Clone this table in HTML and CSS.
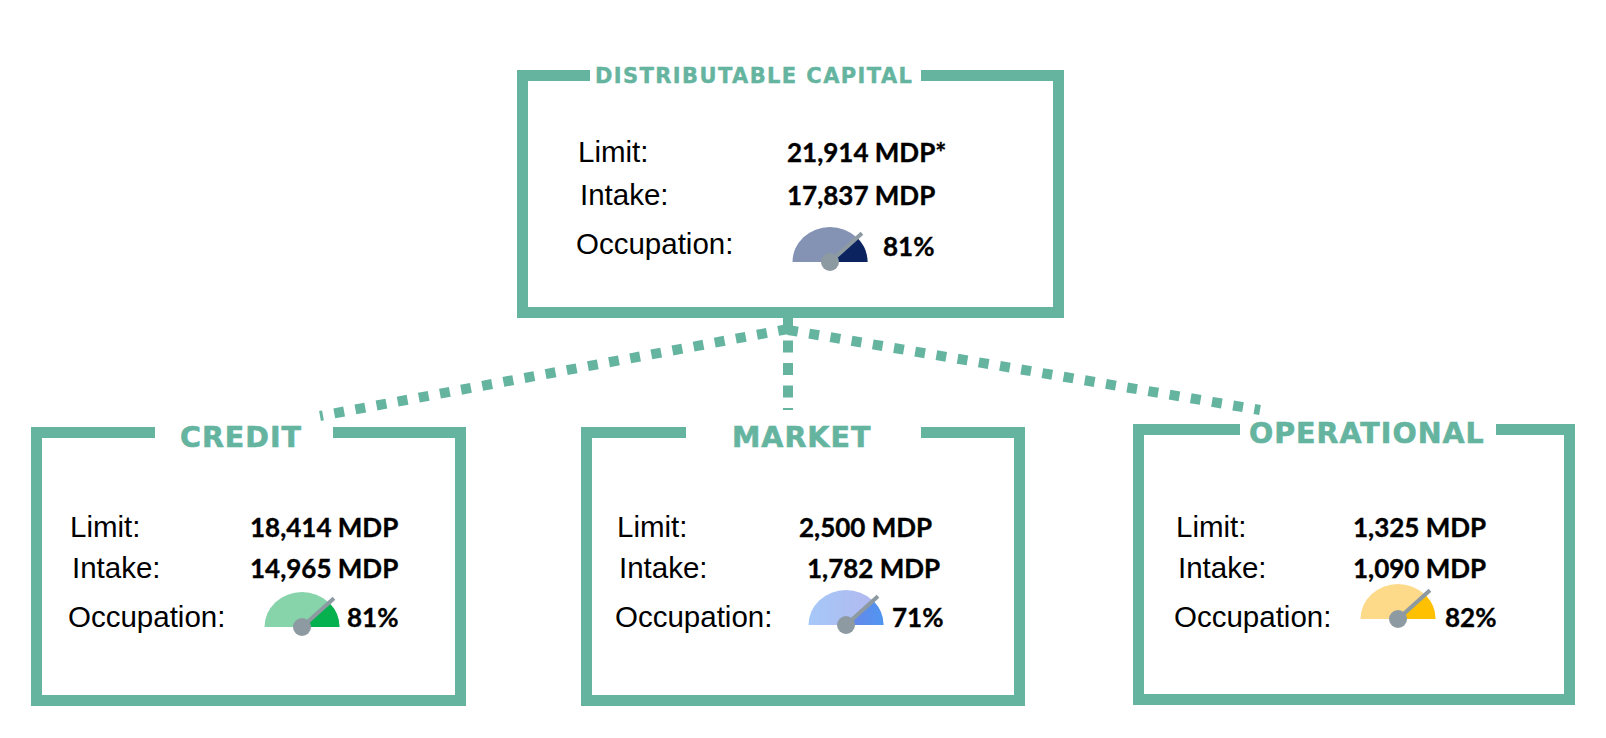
FILE: index.html
```html
<!DOCTYPE html>
<html lang="en">
<head>
<meta charset="utf-8">
<title>Distributable Capital</title>
<link rel="stylesheet" href="styles.css">
</head>
<body>
<div class="page">
  <div class="top-row">
    <section class="panel panel--capital">
      <h2 class="panel__title">DISTRIBUTABLE CAPITAL</h2>
      <div class="row row--limit"><span class="label">Limit:</span><span class="value">21,914 MDP*</span></div>
      <div class="row row--intake"><span class="label">Intake:</span><span class="value">17,837 MDP</span></div>
      <div class="row row--occ"><span class="label">Occupation:</span><svg class="gauge gauge--navy" viewBox="0 0 76 46" width="76" height="46"><path class="gauge__bg" d="M0.5 36 A37.5 35 0 0 1 75.5 36 Z"/><path class="gauge__fill" d="M38 36 L75.5 36 A37.5 35 0 0 0 65.87 12.58 Z"/><line class="gauge__needle" x1="38" y1="36" x2="69.96" y2="7.23"/><circle class="gauge__hub" cx="38" cy="36" r="9"/></svg><span class="value pct">81%</span></div>
    </section>
  </div>

  <svg class="connectors" viewBox="0 0 1606 109" width="1606" height="109">
    <line class="connector" x1="788" y1="11" x2="320" y2="98"/>
    <line class="connector" x1="788" y1="12" x2="1260" y2="92"/>
    <line class="connector connector--v" x1="788" y1="0" x2="788" y2="92"/>
  </svg>

  <div class="bottom-row">
    <section class="panel panel--credit">
      <h2 class="panel__title">CREDIT</h2>
      <div class="row row--limit"><span class="label">Limit:</span><span class="value">18,414 MDP</span></div>
      <div class="row row--intake"><span class="label">Intake:</span><span class="value">14,965 MDP</span></div>
      <div class="row row--occ"><span class="label">Occupation:</span><svg class="gauge gauge--green" viewBox="0 0 76 46" width="76" height="46"><path class="gauge__bg" d="M0.5 36 A37.5 35 0 0 1 75.5 36 Z"/><path class="gauge__fill" d="M38 36 L75.5 36 A37.5 35 0 0 0 65.87 12.58 Z"/><line class="gauge__needle" x1="38" y1="36" x2="69.96" y2="7.23"/><circle class="gauge__hub" cx="38" cy="36" r="9"/></svg><span class="value pct">81%</span></div>
    </section>

    <section class="panel panel--market">
      <h2 class="panel__title">MARKET</h2>
      <div class="row row--limit"><span class="label">Limit:</span><span class="value">2,500 MDP</span></div>
      <div class="row row--intake"><span class="label">Intake:</span><span class="value value--shift">1,782 MDP</span></div>
      <div class="row row--occ"><span class="label">Occupation:</span><svg class="gauge gauge--blue" viewBox="0 0 76 46" width="76" height="46"><defs><linearGradient id="blueBg" x1="0" y1="0" x2="1" y2="0"><stop offset="0" stop-color="#a6c8f8"/><stop offset="1" stop-color="#b3b6ef"/></linearGradient><linearGradient id="blueFill" x1="0" y1="0" x2="1" y2="0"><stop offset="0" stop-color="#6a84ea"/><stop offset="1" stop-color="#4f96f0"/></linearGradient></defs><path class="gauge__bg" d="M0.5 36 A37.5 35 0 0 1 75.5 36 Z"/><path class="gauge__fill" d="M38 36 L75.5 36 A37.5 35 0 0 0 65.87 12.58 Z"/><line class="gauge__needle" x1="38" y1="36" x2="69.96" y2="7.23"/><circle class="gauge__hub" cx="38" cy="36" r="9"/></svg><span class="value pct">71%</span></div>
    </section>

    <section class="panel panel--operational">
      <h2 class="panel__title">OPERATIONAL</h2>
      <div class="row row--limit"><span class="label">Limit:</span><span class="value">1,325 MDP</span></div>
      <div class="row row--intake"><span class="label">Intake:</span><span class="value">1,090 MDP</span></div>
      <div class="row row--occ"><span class="label">Occupation:</span><svg class="gauge gauge--yellow" viewBox="0 0 76 46" width="76" height="46"><path class="gauge__bg" d="M0.5 36 A37.5 35 0 0 1 75.5 36 Z"/><path class="gauge__fill" d="M38 36 L75.5 36 A37.5 35 0 0 0 65.87 12.58 Z"/><line class="gauge__needle" x1="38" y1="36" x2="69.96" y2="7.23"/><circle class="gauge__hub" cx="38" cy="36" r="9"/></svg><span class="value pct">82%</span></div>
    </section>
  </div>
</div>
</body>
</html>
```

FILE: styles.css
```css
* {
  box-sizing: border-box;
}

html,
body {
  margin: 0;
  padding: 0;
  background: #ffffff;
}

.page {
  width: 1606px;
  height: 738px;
  overflow: hidden;
  font-family: "Liberation Sans", Arial, sans-serif;
  color: #000000;
  background: #ffffff;
}

/* ---------- layout ---------- */

.top-row {
  padding: 70px 0 0 517px;
}

.connectors {
  display: block;
}

.connector {
  stroke: #65b4a0;
  stroke-width: 10;
  stroke-dasharray: 10 11.5;
  fill: none;
}

.connector--v {
  stroke-dasharray: 12 10.5;
}

.bottom-row {
  display: flex;
  align-items: flex-start;
  padding-left: 31px;
}

/* ---------- panels ---------- */

.panel {
  position: relative;
  border: 11px solid #65b4a0;
  background: #ffffff;
}

.panel__title {
  position: absolute;
  margin: 0;
  background: #ffffff;
  color: #65b4a0;
  font-family: "DejaVu Sans", "Liberation Sans", Arial, sans-serif;
  font-weight: 700;
  white-space: nowrap;
  -webkit-text-stroke: 0.6px #65b4a0;
}

.panel--capital {
  width: 547px;
  height: 248px;
  padding: 51px 0 0 50px;
}

.panel--capital .panel__title {
  top: -15px;
  left: 62px;
  font-size: 21px;
  line-height: 21px;
  letter-spacing: 1.4px;
  padding: 0 8px 0 5px;
  -webkit-text-stroke: 0.4px #65b4a0;
}

.panel--credit,
.panel--market,
.panel--operational {
  height: 279px;
  padding-top: 69px;
}

.panel--credit {
  width: 435px;
  padding-left: 28px;
}

.panel--market {
  width: 444px;
  margin-left: 115px;
  padding-left: 25px;
}

.panel--operational {
  width: 442px;
  height: 281px;
  margin-left: 108px;
  margin-top: -3px;
  padding-top: 72px;
  padding-left: 32px;
}

.bottom-row .panel__title {
  top: -15px;
  font-size: 28.5px;
  line-height: 29px;
  letter-spacing: 1px;
}

.panel--credit .panel__title {
  left: 113px;
  padding: 0 31px 0 25px;
}

.panel--market .panel__title {
  left: 94px;
  padding: 0 50px 0 46px;
}

.panel--operational .panel__title {
  top: -16px;
  left: 96px;
  padding: 0 11px 0 9px;
}

/* ---------- rows ---------- */

.row {
  height: 41px;
  line-height: 40px;
  white-space: nowrap;
}

.row--intake {
  height: 49px;
}

.panel--capital .row--limit {
  height: 43px;
}

.panel--capital .row--intake {
  height: 49px;
}

.label {
  display: inline-block;
  font-size: 29.5px;
}

.row--intake .label {
  padding-left: 2px;
}

.row--occ .label {
  margin-left: -2px;
  margin-right: 2px;
}

.panel--capital .label {
  width: 209px;
}

.panel--credit .label {
  width: 180px;
}

.panel--market .label {
  width: 182px;
}

.panel--operational .label {
  width: 177px;
}

.value {
  font-family: Lato, "Liberation Sans", sans-serif;
  font-weight: 700;
  font-size: 26px;
  -webkit-text-stroke: 0.35px #000000;
}

.value--shift {
  padding-left: 8px;
}

/* ---------- gauges ---------- */

.gauge {
  display: inline-block;
  overflow: visible;
  margin-top: -30px;
}

.gauge__needle {
  stroke: #8d9aa2;
  stroke-width: 4;
}

.gauge__hub {
  fill: #8d9aa2;
}

.gauge--navy .gauge__bg { fill: #8493b4; }
.gauge--navy .gauge__fill { fill: #0b2460; }

.gauge--green .gauge__bg { fill: #87d4ab; }
.gauge--green .gauge__fill { fill: #05b04f; }

.gauge--blue .gauge__bg { fill: url(#blueBg); }
.gauge--blue .gauge__fill { fill: url(#blueFill); }

.gauge--yellow .gauge__bg { fill: #fcda8a; }
.gauge--yellow .gauge__fill { fill: #ffc000; }

.panel--capital .gauge {
  margin-left: 5px;
  vertical-align: -18px;
}

.panel--credit .gauge {
  margin-left: 14px;
  vertical-align: -10px;
}

.panel--market .gauge {
  margin-left: 9px;
  vertical-align: -8px;
}

.panel--operational .gauge {
  margin-left: 7px;
  vertical-align: -2px;
}

.pct {
  margin-left: 8px;
}

.panel--capital .pct {
  margin-left: 15px;
  vertical-align: -2px;
}

.panel--credit .pct {
  margin-left: 7px;
}

.panel--operational .pct {
  margin-left: 9px;
}
```
